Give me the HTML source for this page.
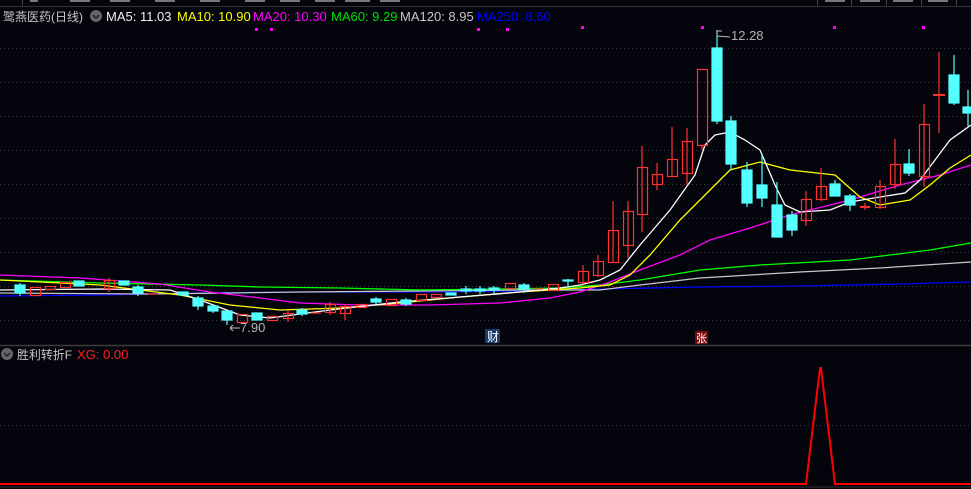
<!DOCTYPE html>
<html><head><meta charset="utf-8"><style>
html,body{margin:0;padding:0;background:#04040c;width:971px;height:489px;overflow:hidden}
svg{display:block}
text{font-family:"Liberation Sans","Noto Sans CJK SC",sans-serif}
</style></head><body>
<svg width="971" height="489" viewBox="0 0 971 489" xmlns="http://www.w3.org/2000/svg">
<rect width="971" height="489" fill="#04040c"/>
<line x1="0" y1="6.5" x2="971" y2="6.5" stroke="#333" stroke-width="1"/>
<line x1="22.5" y1="0" x2="22.5" y2="6" stroke="#444"/>
<g stroke="#444"><line x1="817.5" y1="0" x2="817.5" y2="6"/><line x1="851.5" y1="0" x2="851.5" y2="6"/><line x1="886.5" y1="0" x2="886.5" y2="6"/><line x1="921.5" y1="0" x2="921.5" y2="6"/><line x1="956.5" y1="0" x2="956.5" y2="6"/></g>
<g fill="#777"><rect x="30" y="0" width="8" height="2"/><rect x="70" y="0" width="20" height="2"/><rect x="110" y="0" width="20" height="2"/><rect x="155" y="0" width="20" height="2"/><rect x="200" y="0" width="20" height="2"/><rect x="245" y="0" width="20" height="2"/><rect x="280" y="0" width="20" height="2"/><rect x="315" y="0" width="20" height="2"/><rect x="345" y="0" width="25" height="2"/><rect x="380" y="0" width="20" height="2"/><rect x="825" y="0" width="20" height="2"/><rect x="860" y="0" width="20" height="2"/><rect x="893" y="0" width="20" height="2"/><rect x="928" y="0" width="20" height="2"/></g>

<text x="3" y="21" font-size="12" fill="#c8c8c8" textLength="80" lengthAdjust="spacingAndGlyphs">鹭燕医药(日线)</text>
<circle cx="96" cy="16" r="6" fill="#666"/>
<path d="M93 15 L96 18 L99 15" stroke="#222" stroke-width="1.5" fill="none"/>
<text y="21" font-size="13"><tspan x="106" fill="#f0f0f0">MA5: 11.03</tspan><tspan x="177" fill="#ffff00">MA10: 10.90</tspan><tspan x="253" fill="#ff00ff">MA20: 10.30</tspan><tspan x="331" fill="#00e000">MA60: 9.29</tspan><tspan x="400" fill="#c8c8c8">MA120: 8.95</tspan><tspan x="477" fill="#0000ff">MA250: 8.60</tspan></text>
<g fill="#ff00ff"><rect x="255" y="28" width="3" height="3"/><rect x="270" y="28" width="3" height="3"/><rect x="477" y="28" width="3" height="3"/><rect x="506" y="28" width="3" height="3"/><rect x="581" y="26" width="3" height="3"/><rect x="701" y="26" width="3" height="3"/><rect x="833" y="26" width="3" height="3"/><rect x="922" y="26" width="3" height="3"/></g>

<g stroke="#3a3a3a" stroke-dasharray="1,3" stroke-width="1">
<line x1="0" y1="48.5" x2="971" y2="48.5"/><line x1="0" y1="82.5" x2="971" y2="82.5"/><line x1="0" y1="116.5" x2="971" y2="116.5"/><line x1="0" y1="150.5" x2="971" y2="150.5"/><line x1="0" y1="184.5" x2="971" y2="184.5"/><line x1="0" y1="218.5" x2="971" y2="218.5"/><line x1="0" y1="252.5" x2="971" y2="252.5"/><line x1="0" y1="286.5" x2="971" y2="286.5"/><line x1="0" y1="320.5" x2="971" y2="320.5"/>
<line x1="0" y1="425.5" x2="971" y2="425.5"/>
</g>

<g fill="none" stroke-width="1.3">
<polyline stroke="#0000ff" points="0,296 100,295 200,293 300,292 420,292 520,291 600,289 700,287 800,286 900,284 971,282"/>
<polyline stroke="#c8c8c8" points="0,293 150,294 300,292 420,291 520,290 600,290 640,285 700,278 800,272 880,268 971,262"/>
<polyline stroke="#00ff00" points="0,280 100,283 200,285 260,287 340,288 420,290 500,289 560,288 600,285 640,280 700,270 760,265 850,260 930,250 971,243"/>
<polyline stroke="#ff00ff" points="0,275 80,278 160,284 210,292 260,298 300,303 360,305 430,305 500,303 550,298 580,292 610,282 640,270 680,255 710,240 750,228 790,215 850,200 900,185 940,175 971,165"/>
<polyline stroke="#ffff00" points="0,280 100,285 180,295 230,305 280,310 340,308 400,303 460,297 520,292 580,288 610,285 630,275 650,255 680,220 710,190 730,170 760,162 790,170 835,175 860,197 880,205 910,200 930,185 950,168 971,155"/>
<polyline stroke="#ffffff" points="0,290 100,289 170,290 200,300 240,315 270,318 330,310 400,302 460,297 520,292 560,288 580,285 600,280 620,270 640,245 670,210 695,175 705,145 715,135 730,132 745,140 760,150 775,185 785,205 800,212 830,210 850,202 880,197 905,193 920,180 935,160 950,140 971,125"/>
</g>

<g stroke-width="1.2">
<g fill="#54ffff" stroke="#54ffff">
<line x1="20" y1="283" x2="20" y2="296"/><rect x="15" y="285" width="10" height="8"/>
<rect x="74" y="281" width="10" height="5"/>
<rect x="119" y="281" width="10" height="4"/>
<line x1="138" y1="285" x2="138" y2="296"/><rect x="133" y="287" width="10" height="6"/>
<rect x="178" y="292" width="10" height="3"/>
<line x1="198" y1="296" x2="198" y2="310"/><rect x="193" y="298" width="10" height="8"/>
<line x1="213" y1="304" x2="213" y2="313"/><rect x="208" y="306" width="10" height="5"/>
<line x1="227" y1="310" x2="227" y2="325"/><rect x="222" y="311" width="10" height="9"/>
<rect x="252" y="313" width="10" height="7"/>
<line x1="302" y1="308" x2="302" y2="316"/><rect x="297" y="310" width="10" height="4"/>
<line x1="376" y1="297" x2="376" y2="304"/><rect x="371" y="299" width="10" height="3"/>
<line x1="406" y1="298" x2="406" y2="306"/><rect x="401" y="300" width="10" height="4"/>
<rect x="446" y="293" width="10" height="2"/>
<line x1="466" y1="286" x2="466" y2="294"/><rect x="461" y="289" width="10" height="2"/>
<line x1="480" y1="286" x2="480" y2="294"/><rect x="475" y="289" width="10" height="2"/>
<line x1="494" y1="286" x2="494" y2="294"/><rect x="489" y="288" width="10" height="2"/>
<line x1="524" y1="283" x2="524" y2="293"/><rect x="519" y="285" width="10" height="4"/>
<line x1="568" y1="279" x2="568" y2="286"/><rect x="563" y="280" width="10" height="1"/>
<line x1="717" y1="30" x2="717" y2="124"/><rect x="712" y="48" width="10" height="73"/>
<line x1="731" y1="116" x2="731" y2="170"/><rect x="726" y="121" width="10" height="43"/>
<line x1="747" y1="162" x2="747" y2="207"/><rect x="742" y="170" width="10" height="33"/>
<line x1="762" y1="155" x2="762" y2="207"/><rect x="757" y="185" width="10" height="13"/>
<line x1="777" y1="182" x2="777" y2="237"/><rect x="772" y="205" width="10" height="32"/>
<line x1="792" y1="211" x2="792" y2="236"/><rect x="787" y="215" width="10" height="15"/>
<line x1="835" y1="180" x2="835" y2="196"/><rect x="830" y="184" width="10" height="12"/>
<line x1="850" y1="194" x2="850" y2="211"/><rect x="845" y="196" width="10" height="9"/>
<line x1="909" y1="149" x2="909" y2="176"/><rect x="904" y="164" width="10" height="9"/>
<line x1="954" y1="55" x2="954" y2="105"/><rect x="949" y="75" width="10" height="28"/>
<line x1="968" y1="90" x2="968" y2="126"/><rect x="963" y="107" width="10" height="6"/>
</g>
<g fill="none" stroke="#ff3232">
<rect x="30.5" y="287.5" width="10" height="8"/>
<rect x="45.5" y="286.5" width="10" height="3"/>
<rect x="60.5" y="282.5" width="10" height="5"/>
<line x1="109" y1="278" x2="109" y2="292"/><rect x="104.5" y="280.5" width="10" height="8"/>
<line x1="148" y1="294" x2="158" y2="294"/>
<rect x="237.5" y="314.5" width="10" height="8"/>
<rect x="267.5" y="316.5" width="10" height="4"/>
<line x1="288" y1="310" x2="288" y2="322"/><rect x="283.5" y="313.5" width="10" height="5"/>
<line x1="311" y1="313" x2="321" y2="313"/>
<line x1="330" y1="302" x2="330" y2="315"/><rect x="325.5" y="304.5" width="10" height="8"/>
<line x1="345" y1="304" x2="345" y2="320"/><rect x="340.5" y="306.5" width="10" height="7"/>
<rect x="356.5" y="304.5" width="10" height="3"/>
<rect x="386.5" y="299.5" width="10" height="6"/>
<rect x="416.5" y="294.5" width="10" height="6"/>
<rect x="431.5" y="294.5" width="10" height="3"/>
<rect x="505.5" y="283.5" width="10" height="5"/>
<line x1="533" y1="289" x2="543" y2="289"/>
<rect x="548.5" y="284.5" width="10" height="6"/>
<line x1="583" y1="265" x2="583" y2="284"/><rect x="578.5" y="271.5" width="10" height="11"/>
<line x1="598" y1="255" x2="598" y2="277"/><rect x="593.5" y="261.5" width="10" height="14"/>
<line x1="613" y1="201" x2="613" y2="263"/><rect x="608.5" y="230.5" width="10" height="32"/>
<line x1="628" y1="201" x2="628" y2="258"/><rect x="623.5" y="211.5" width="10" height="34"/>
<line x1="642" y1="146" x2="642" y2="232"/><rect x="637.5" y="167.5" width="10" height="47"/>
<line x1="657" y1="163" x2="657" y2="190"/><rect x="652.5" y="174.5" width="10" height="10"/>
<line x1="672" y1="127" x2="672" y2="176"/><rect x="667.5" y="159.5" width="10" height="17"/>
<line x1="687" y1="128" x2="687" y2="185"/><rect x="682.5" y="141.5" width="10" height="32"/>
<line x1="702" y1="145" x2="702" y2="150"/><rect x="697.5" y="69.5" width="10" height="76"/>
<line x1="806" y1="191" x2="806" y2="226"/><rect x="801.5" y="199.5" width="10" height="21"/>
<line x1="821" y1="168" x2="821" y2="201"/><rect x="816.5" y="186.5" width="10" height="13"/>
<line x1="860" y1="207" x2="870" y2="207" stroke-width="2"/><line x1="865" y1="203" x2="865" y2="210"/>
<line x1="880" y1="180" x2="880" y2="209"/><rect x="875.5" y="186.5" width="10" height="21"/>
<line x1="895" y1="139" x2="895" y2="189"/><rect x="890.5" y="164.5" width="10" height="20"/>
<line x1="924" y1="104" x2="924" y2="187"/><rect x="919.5" y="124.5" width="10" height="52"/>
<line x1="939" y1="52" x2="939" y2="133"/><line x1="933" y1="95" x2="945" y2="95" stroke-width="2"/>
</g>
</g>

<path d="M717 31 L717 36 M717 31 L722 31 M717 36 L730 37" stroke="#bbb" stroke-width="1" fill="none"/>
<text x="731" y="40" font-size="13" fill="#b4b4b4">12.28</text>
<path d="M230 328 L240 328 M230 328 L233 325 M230 328 L233 331" stroke="#bbb" fill="none"/>
<text x="240" y="332" font-size="13" fill="#b4b4b4">7.90</text>
<rect x="485" y="329" width="15" height="14" fill="#1a3c6c"/>
<text x="487" y="341" font-size="12" fill="#fff">财</text>
<rect x="695" y="331" width="13" height="13" fill="#7a0a0a"/>
<text x="696" y="342" font-size="11" fill="#fff">张</text>

<line x1="0" y1="345.5" x2="971" y2="345.5" stroke="#3c3c3c" stroke-width="1.5"/>

<circle cx="7" cy="354" r="6" fill="#666"/>
<path d="M4 353 L7 356 L10 353" stroke="#222" stroke-width="1.5" fill="none"/>
<text x="17" y="359" font-size="12" fill="#c8c8c8" textLength="55" lengthAdjust="spacingAndGlyphs">胜利转折F</text>
<text x="77" y="359" font-size="13" fill="#ff2020">XG: 0.00</text>
<polyline points="0,484 806,484 820,368 821,368 835,484 971,484" fill="none" stroke="#ff0000" stroke-width="2"/>
<line x1="0" y1="487" x2="971" y2="487" stroke="#333" stroke-width="1"/>
</svg>
</body></html>
